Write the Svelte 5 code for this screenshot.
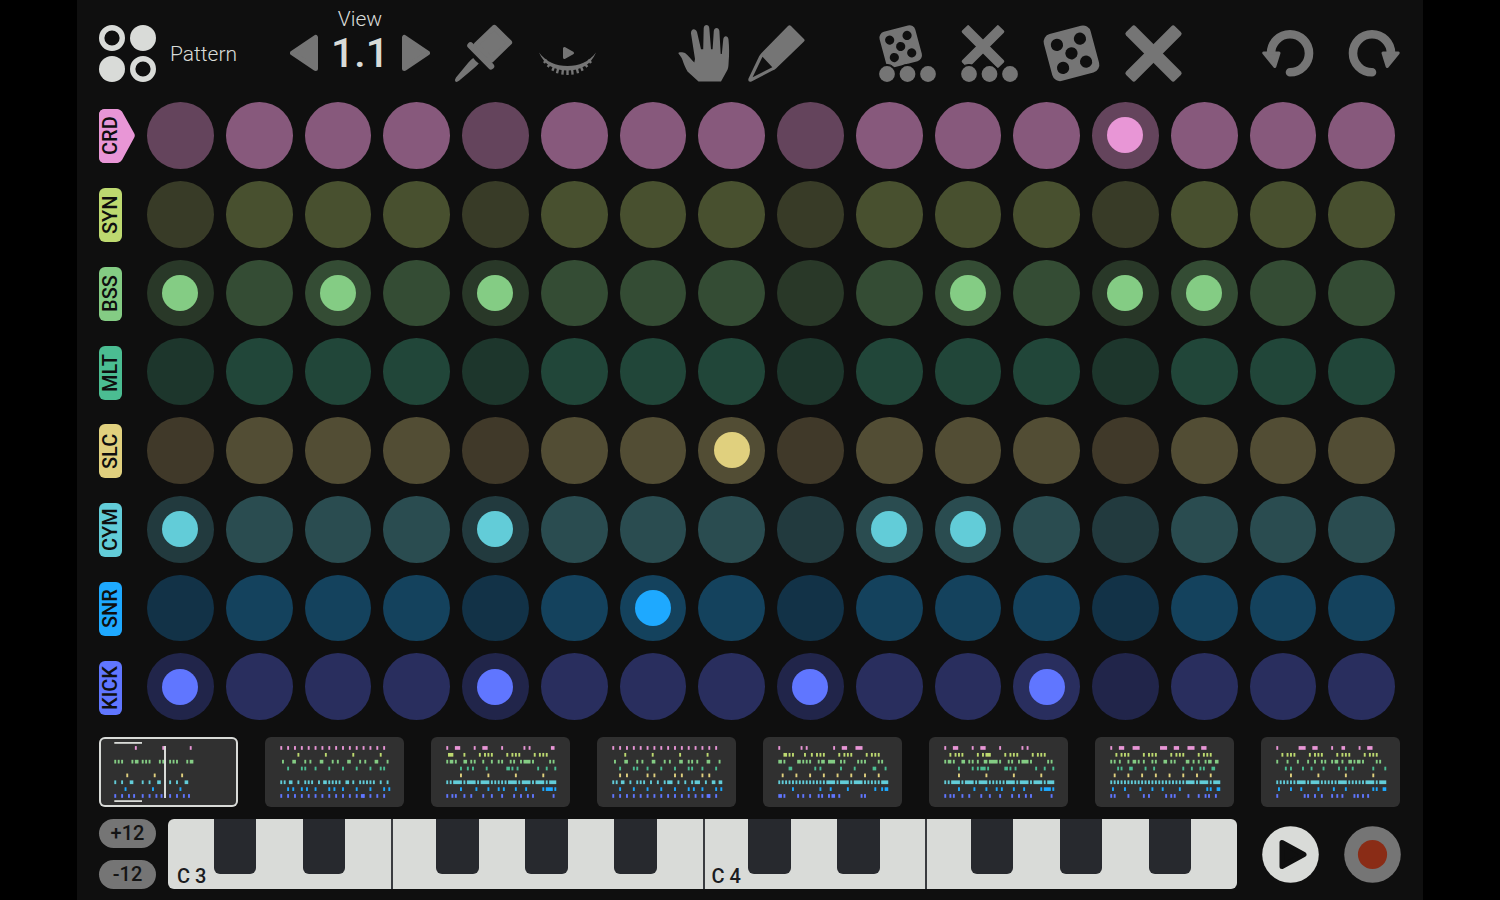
<script>
  const every4 = '0 4 8 12 16 20 24 28 32 36 40 44 48 52 56 60';
  const quads = '8 24 40 56';

  let tracks = $state([
    { name: 'CRD', main: '#e896d6', pad: '#87597c', beat: '#64445c', on: [12] },
    { name: 'SYN', main: '#bdd970', pad: '#48502f', beat: '#383b27', on: [] },
    { name: 'BSS', main: '#84cc84', pad: '#344c34', beat: '#293828', on: [0, 2, 4, 10, 12, 13] },
    { name: 'MLT', main: '#4bbd92', pad: '#214639', beat: '#1d362c', on: [] },
    { name: 'SLC', main: '#e0d07e', pad: '#524d34', beat: '#403929', on: [7] },
    { name: 'CYM', main: '#62ccd8', pad: '#2a4c50', beat: '#223a3e', on: [0, 4, 9, 10] },
    { name: 'SNR', main: '#1ea9ff', pad: '#14425d', beat: '#123247', on: [6] },
    { name: 'KICK', main: '#6076ff', pad: '#292e5e', beat: '#21254a', on: [0, 4, 8, 11] }
  ]);
  let selectedTrack = $state(0);
  let selectedPattern = $state(0);

  // One string per track: step numbers, or first-last for a run of notes.
  const patterns = [
    ['12 28 44', '', '0 2 4 10 12-13 16 18 20 26 28-29 32 34 36 42 44-45', '', '7 23 39',
      '0 4 9-10 16 20 25-26 32 36 41-42', '6 22 38', '0 4 8 11 16 20 24 27 32 36 40 43'],
    [every4, '10 26 42 58', '1 7-8 14 17 23-24 30 33 39-40 46 49 55-56 62', '4 12 14 20 28 36 44 52 58 60', '',
      '0 2 5-6 10 14 16 18 22 25-26 28 30 32 34 38-39 42 46 48 50 52 54 58 62',
      '4 7 12 15 20 28 31 36 44 52 60 63', every4 + ' 47-48'],
    ['0 5-7 16 21-23 32 45 48 61-62', '1-3 10 19 22 24 26 35 38 40 42 51 54 56 58',
      '0 2-3 5 10-11 14 16 21 26 30 32 37 39 43 45-48 50 60 62', '8 12 15 23 35-36 38 41 53 58 63', quads,
      '0 2 4-8 10 12-16 18 20-24 26 28 30 32 34 36-40 42 44-48 50 52-56 58 60-63',
      '8 17 24 30 33 40 46 56 58-61 63', '0 3 5 10 14 21 26 32 39 43 47 50 62'],
    [every4, '7 23 39 55', '1 7-8 14 17 23-24 30 33 39-40 44 46 49 55-56 62', '4 12 14 20 28 36 44 46 52 60',
      '4 8 20 24 36 40 52 56', '0 2 5-6 10 14 16 18 22 26 30 32-34 38 42 46 48-50 54 58-59 62-63',
      '4 12 20 28 36 44 47 52 60 63', every4 + ' 55-56'],
    ['0 13 16 32 37-39 45-48', '3-4 6 8 15 19 22 24 26 35 38 40 42 51 54 56 58',
      '0-1 3 11-12 14 16 18 23 25-26 29-32 36 38 46 48 50 58 60', '6-7 21 24 36 44 55-56 62', '2 10 18 26 34 42 50 58',
      '0 2 4 6 8 10 12 14 16 18 20 22 24 26 28-32 34 36-40 42 44-48 50 52 54 56 58 60-63',
      '8 24 30 40 56 60 62-63', '0-1 3 11 14 18 23 25 29 31-32 35 48 50'],
    ['0 5-7 16 21-23 32 45 48', '3 6 8 10 19 22 24-26 35 38 40 42 51 54 56 58',
      '0 2-3 5 10-11 14 16 19 23-24 26-30 32 37 39 43 45-48 50 60 62', '8 16 19 21-23 25 35-36 38 41 53 58 63', quads,
      '0 2 4-8 10 12-16 18 20-24 26 28 30 32 34 36-40 42 44-48 50 52-56 58 60-63',
      '8 17 24 30 33 40 46 56 58-61 63', '0 3 5 10 14 21 26 32 39 43 47 50 62'],
    ['0 5-7 13-16 29-32 37-39 45-48 53-55', '3 6 8 10 19 22 24 26 35 38 40 42 51 54 56 58',
      '0 2 5 10 13-14 16 19 24 26 31-32 35 37 44-45 48 51 55 57-58 61-62', '4 6 11-12 20 25 42 47 52 54 59-60',
      '2 10 18 26 34 42 50 58',
      '0 2 4 6 8 10 12 14 16 18 20 22 24 26 28 30 32 34 36 38 40 42 44-48 50 52-56 58 60-63',
      '1 8 17 24 30 40 56 58 62-63', '0 2 10 19 22 32 35 37 45 51 55 57 61'],
    ['0 13-16 21-23 32 38-39 48 53-55', '3 6 8 10 19 22 24 26 35 38 40 42 51 54 56 58',
      '0 6 12 18 22 26 28 32 34-35 38 42-43 45 47-48 50 58 60', '5 8 15 20 27 36 40 44 56 63', quads,
      '0 2 4 6 8 10 12-16 18 20-24 26 28 30 32 34 36-40 42 44 46 48 50 52-56 58 60-63',
      '1 8 14 24 33 40 56 58 62-63', '0 16 18 22 26 32 35 38 45 47 50 53']
  ];

  const stepWidth = 1.715;
  function notes(row) {
    return row.split(' ').filter(Boolean).map((part) => {
      const [a, b = a] = part.split('-').map(Number);
      return { x: 15.3 + a * stepWidth, w: (b - a) * stepWidth + 1.9 };
    });
  }

  function toggle(track, step) {
    track.on = track.on.includes(step) ? track.on.filter((s) => s !== step) : [...track.on, step];
  }

  const steps = Array.from({ length: 16 }, (_, i) => i);
  const noteNames = ['C', 'C#', 'D', 'D#', 'E', 'F', 'F#', 'G', 'G#', 'A', 'A#', 'B'];
  const keys = [3, 4].flatMap((oct) =>
    noteNames.map((n) => ({
      id: n + oct,
      black: n.length === 2,
      divider: n === 'F' || (n === 'C' && oct === 4),
      label: n === 'C' ? `C ${oct}` : ''
    }))
  );
</script>

{#snippet pips(r, d)}
  {#each [[-1, -1], [1, -1], [0, 0], [-1, 1], [1, 1]] as [x, y]}
    <circle cx={x * d} cy={y * d} {r} class="cut" />
  {/each}
{/snippet}

{#snippet dots()}
  {#each [8, 28.5, 49] as cx}
    <circle {cx} cy="49" r="9.6" class="cut-ring" />
  {/each}
  {#each [8, 28.5, 49] as cx}
    <circle {cx} cy="49" r="7.9" />
  {/each}
{/snippet}

{#snippet turn()}
  <path d="M10 28.3A19 19 0 1 1 29 47.3" class="arc" />
  <path d="M2.8 28H18L13.8 41.5Z" class="soft" />
{/snippet}

<main class="app">
  <header class="toolbar">
    <button class="brand">
      <svg class="icon light" viewBox="0 0 57 57" aria-hidden="true">
        <circle cx="13" cy="13" r="10.3" class="ring" />
        <circle cx="44" cy="13" r="13" />
        <circle cx="13" cy="44" r="13" />
        <circle cx="44" cy="44" r="10.3" class="ring" />
      </svg>
      <span>Pattern</span>
    </button>

    <div class="view">
      <span class="view-title">View</span>
      <div class="stepper">
        <button aria-label="Previous view">
          <svg width="28" height="38" viewBox="0 0 28 38"><path d="M25.5 3.5V34.5L2.5 19Z" class="soft wide" /></svg>
        </button>
        <span class="view-value">1.1</span>
        <button aria-label="Next view">
          <svg width="28" height="38" viewBox="0 0 28 38"><path d="M2.5 3.5V34.5L25.5 19Z" class="soft wide" /></svg>
        </button>
      </div>
    </div>

    <div class="group pins">
      <button aria-label="Pin">
        <svg class="icon" viewBox="0 0 57 57">
          <path d="M39.3 2.3L54.6 17.4L36.6 35L21.3 19.6Z" class="soft wide" />
          <path d="M15.5 20.5L36 41.3" class="bar" />
          <path d="M18.2 33Q20 35.8 23.8 38.4Q21.5 41 18 44L4 55.8Q1.6 57.6 0.4 56.4Q-0.6 55 1 52.6L13 38Q16 34.4 18.2 33Z" />
        </svg>
      </button>
      <button aria-label="Follow playback">
        <svg class="icon" viewBox="0 0 57 57">
          <path d="M0 27.5C7 37 17 41 28.5 41S50 37 57 27.5C52 40 41 45.5 28.5 45.5S5 40 0 27.5Z" />
          <path
            d="M7.500 34.500L5 38M11.500 38L8.700 42M15.500 40.500L13.400 45.700M19.500 42L18 48.300M24 43L23.400 49.700M28.500 43V50M33 43L33.600 49.700M37.500 42L39 48.300M41.500 40.500L43.600 45.700M45.500 38L48.300 42M49.500 34.500L52 38"
            class="lash"
          />
          <path d="M25.500 23.500V32.500L33.500 28Z" class="soft" />
        </svg>
      </button>
    </div>

    <div class="group edit">
      <button aria-label="Move">
        <svg class="icon narrow" viewBox="0 0 53 57">
          <path d="M0.500 28.500C-0.500 26.800 5 26.800 7 28C10 30 13.500 35 16.300 37.500L17 34L13 8.500C12.500 3.500 17.500 2.500 19 7L23 24.300H25.200L25.700 3.200C26 -1 31 -1 31.300 3.200L33 24.300H34.600L35.800 6C36.200 2 41 2 41.400 6L42.700 29H43.800L45.300 14C46 10 50 10.500 50.500 14.500C51.300 22 51.300 30 50.700 36C50.500 40 50.500 42.500 49.500 44.800L43 56.500H20.500L9.500 46.500C7.500 43.500 5.500 38 4.500 35C3.500 32 2 30.500 0.500 28.500Z" />
        </svg>
      </button>
      <button aria-label="Draw">
        <svg class="icon" viewBox="0 0 57 57">
          <path
            fill-rule="evenodd"
            d="M40 1Q41.500 -0.500 43 1L56 14Q57.300 15.300 56 16.500L28 43.500Q26.500 44.800 24.500 45.600L3.500 56.500Q-0.500 57.500 0.500 53.500L11 31.500Q12 29.500 13.500 28ZM14.500 31.800L4.600 52.300L24.300 42.200Z"
          />
        </svg>
      </button>
    </div>

    <div class="group random">
      <button aria-label="Randomize steps">
        <svg class="icon" viewBox="0 0 57 57">
          <g transform="translate(21.700 21.500) rotate(-15)">
            <rect x="-18.500" y="-18.500" width="37" height="37" rx="6" />
            {@render pips(4.6, 9)}
          </g>
          {@render dots()}
        </svg>
      </button>
      <button aria-label="Clear steps">
        <svg class="icon" viewBox="0 0 57 57">
          <g transform="translate(22 21.500) rotate(45)">
            <rect x="-26" y="-5" width="52" height="10" rx="1.500" />
            <rect x="-5" y="-26" width="10" height="52" rx="1.500" />
          </g>
          {@render dots()}
        </svg>
      </button>
      <button aria-label="Randomize all">
        <svg class="icon" viewBox="0 0 57 57">
          <g transform="translate(28.500 28.300) rotate(-15)">
            <rect x="-24.200" y="-24.200" width="48.400" height="48.400" rx="8" />
            {@render pips(6.1, 11.9)}
          </g>
        </svg>
      </button>
      <button aria-label="Clear all">
        <svg class="icon" viewBox="0 0 57 57">
          <g transform="translate(28.500 28.500) rotate(45)">
            <rect x="-34.500" y="-6.700" width="69" height="13.400" rx="2.500" />
            <rect x="-6.700" y="-34.500" width="13.400" height="69" rx="2.500" />
          </g>
        </svg>
      </button>
    </div>

    <div class="group history">
      <button aria-label="Undo">
        <svg class="icon narrow" viewBox="0 0 53 57">{@render turn()}</svg>
      </button>
      <button aria-label="Redo">
        <svg class="icon narrow" viewBox="0 0 53 57"><g transform="translate(53 0) scale(-1 1)">{@render turn()}</g></svg>
      </button>
    </div>
  </header>

  <section class="rows" aria-label="Step sequencer">
    {#each tracks as track, t}
      <div class="row" style:--main={track.main} style:--pad={track.pad} style:--beat={track.beat}>
        <button class="tag" class:selected={t === selectedTrack} onclick={() => (selectedTrack = t)}>
          {#if t === selectedTrack}
            <svg class="tag-shape" viewBox="0 0 36 54" aria-hidden="true">
              <path d="M6 0H18Q21 0 23 2.500L35 24Q36.600 26.500 35 29L23 51Q21 54 18 54H6Q0 54 0 48V6Q0 0 6 0Z" />
            </svg>
          {/if}
          <span>{track.name}</span>
        </button>
        <div class="pads">
          {#each steps as s}
            <button
              class="pad"
              class:beat={s % 4 === 0}
              class:on={track.on.includes(s)}
              aria-label="{track.name} step {s + 1}"
              aria-pressed={track.on.includes(s)}
              onclick={() => toggle(track, s)}
            ></button>
          {/each}
        </div>
      </div>
    {/each}
  </section>

  <nav class="patterns" aria-label="Patterns">
    {#each patterns as pattern, p}
      <button class="thumb" class:selected={p === selectedPattern} aria-label="Pattern {p + 1}" onclick={() => (selectedPattern = p)}>
        <svg viewBox="0 0 139 70" aria-hidden="true">
          {#each pattern as row, r}
            {#each notes(row) as n}
              <rect x={n.x} y={9.1 + r * 6.86} width={n.w} height="3.700" fill={tracks[r].main} />
            {/each}
          {/each}
          {#if p === selectedPattern}
            <g class="marks">
              <rect x="15.300" y="5" width="27.700" height="1.800" />
              <rect x="15.300" y="63.200" width="27.700" height="1.800" />
              <rect x="65" y="9" width="2" height="52" />
            </g>
          {/if}
        </svg>
      </button>
    {/each}
  </nav>

  <footer class="deck">
    <div class="octave">
      <button>+12</button>
      <button>-12</button>
    </div>
    <div class="keyboard">
      {#each keys as key (key.id)}
        <button class="key" class:black={key.black} class:divider={key.divider} aria-label={key.label || key.id}>
          {#if key.label}<span>{key.label}</span>{/if}
        </button>
      {/each}
    </div>
    <div class="transport">
      <button aria-label="Play">
        <svg class="icon light" viewBox="0 0 57 57">
          <circle cx="28.500" cy="28.500" r="28.300" />
          <path d="M20 16.500V40.500L42 28.500Z" class="play" />
        </svg>
      </button>
      <button aria-label="Record">
        <svg class="icon" viewBox="0 0 57 57">
          <circle cx="28.500" cy="28.500" r="28.300" />
          <circle cx="28.500" cy="28.500" r="14.600" class="rec" />
        </svg>
      </button>
    </div>
  </footer>
</main>

<style>
  :global(body) {
    background: #000;
  }
  .app {
    --bg: #0f0f0f;
    --grey: #757575;
    --light: #d9dbd8;
    box-sizing: border-box;
    min-height: 100vh;
    margin: 0 77px;
    padding: 0 22px 11px;
    background: var(--bg);
    color: var(--light);
    font-family: Roboto, 'Liberation Sans', sans-serif;
    font-size: 20px;
  }
  button {
    margin: 0;
    padding: 0;
    border: 0;
    background: none;
    color: inherit;
    font: inherit;
    cursor: pointer;
  }
  svg {
    display: block;
    fill: var(--grey);
  }
  .icon {
    width: 57px;
    height: 57px;
    overflow: visible;
  }
  .icon.narrow {
    width: 53px;
  }
  .icon.light {
    fill: var(--light);
  }
  .ring {
    fill: none;
    stroke: var(--light);
    stroke-width: 5.4;
  }
  .soft {
    stroke: var(--grey);
    stroke-width: 3;
    stroke-linejoin: round;
  }
  .soft.wide {
    stroke-width: 5;
  }
  .bar {
    fill: none;
    stroke: var(--grey);
    stroke-width: 6.5;
    stroke-linecap: round;
  }
  .arc {
    fill: none;
    stroke: var(--grey);
    stroke-width: 8.6;
    stroke-linecap: round;
  }
  .lash {
    fill: none;
    stroke: var(--grey);
    stroke-width: 2.4;
  }
  .cut {
    fill: var(--bg);
  }
  .cut-ring {
    fill: var(--bg);
    stroke: var(--bg);
    stroke-width: 1;
  }

  .toolbar {
    display: flex;
    height: 102px;
    font-size: 21px;
    font-weight: 300;
  }
  .brand,
  .group {
    display: flex;
    align-items: center;
    height: 57px;
    margin-top: 25px;
  }
  .brand {
    gap: 14px;
    width: 139px;
  }
  .view {
    display: flex;
    flex-direction: column;
    align-items: center;
    width: 140px;
    margin-left: 52px;
    padding-top: 9px;
  }
  .view-title {
    line-height: 20px;
  }
  .stepper {
    display: flex;
    align-items: center;
    justify-content: space-between;
    width: 100%;
    height: 48px;
  }
  .view-value {
    font-size: 41px;
    font-weight: 500;
    line-height: 48px;
  }
  .pins {
    gap: 27px;
    margin-left: 25px;
  }
  .edit {
    gap: 17px;
    margin-left: 82px;
  }
  .random {
    gap: 25px;
    margin-left: 74px;
  }
  .history {
    gap: 34px;
    margin-left: auto;
  }

  .rows {
    display: grid;
    gap: 12px;
  }
  .row {
    display: flex;
    align-items: center;
    padding-right: 6px;
  }
  .tag {
    position: relative;
    flex: none;
    width: 23px;
    height: 54px;
    margin: 2px 25px 0 0;
    border-radius: 6px;
    background: var(--main);
    color: #0f0f0f;
    font-weight: 500;
  }
  .tag span {
    position: relative;
    display: block;
    width: 23px;
    height: 54px;
    line-height: 23px;
    text-align: center;
    writing-mode: vertical-rl;
    transform: rotate(180deg);
  }
  .tag-shape {
    position: absolute;
    top: 0;
    left: 0;
    width: 36px;
    height: 54px;
    fill: var(--main);
  }
  .pads {
    flex: 1;
    display: grid;
    grid-template-columns: repeat(16, 1fr);
    gap: 12px;
  }
  .pad {
    display: grid;
    place-items: center;
    aspect-ratio: 1;
    border-radius: 50%;
    background: var(--pad);
  }
  .pad.beat {
    background: var(--beat);
  }
  .pad.on::after {
    content: '';
    width: 36px;
    height: 36px;
    border-radius: 50%;
    background: var(--main);
  }

  .patterns {
    display: grid;
    grid-template-columns: repeat(8, 1fr);
    gap: 27px;
    margin-top: 17px;
    padding-right: 1px;
  }
  .thumb {
    border-radius: 6px;
    background: #303030;
  }
  .thumb.selected {
    box-shadow: inset 0 0 0 2px var(--light);
  }
  .thumb svg {
    width: 100%;
  }
  .marks {
    fill: var(--light);
  }

  .deck {
    display: flex;
    align-items: center;
    margin-top: 12px;
    height: 70px;
  }
  .octave {
    display: grid;
    gap: 12px;
    width: 57px;
    margin-right: 12px;
  }
  .octave button {
    height: 29px;
    border-radius: 15px;
    background: var(--grey);
    color: #141414;
    font-weight: 500;
    line-height: 29px;
  }
  .keyboard {
    flex: 1;
    display: grid;
    grid-template-columns: repeat(24, minmax(0, 1fr));
    height: 70px;
    border-radius: 6px;
    background: var(--light);
    overflow: hidden;
  }
  .key {
    display: flex;
    align-items: flex-end;
    height: 70px;
    color: #1b1c1f;
    font-weight: 500;
    white-space: nowrap;
  }
  .key span {
    padding: 0 0 1px 9px;
    line-height: 24px;
  }
  .key.divider {
    box-shadow: inset 2px 0 #3a3c40;
  }
  .key.black {
    height: 55px;
    margin: 0 1px;
    border-radius: 0 0 6px 6px;
    background: #27292e;
  }
  .transport {
    display: flex;
    gap: 25px;
    margin-left: 25px;
  }
  .play {
    fill: #0f0f0f;
    stroke: #0f0f0f;
    stroke-width: 5;
    stroke-linejoin: round;
  }
  .rec {
    fill: #8a2c16;
  }
</style>
